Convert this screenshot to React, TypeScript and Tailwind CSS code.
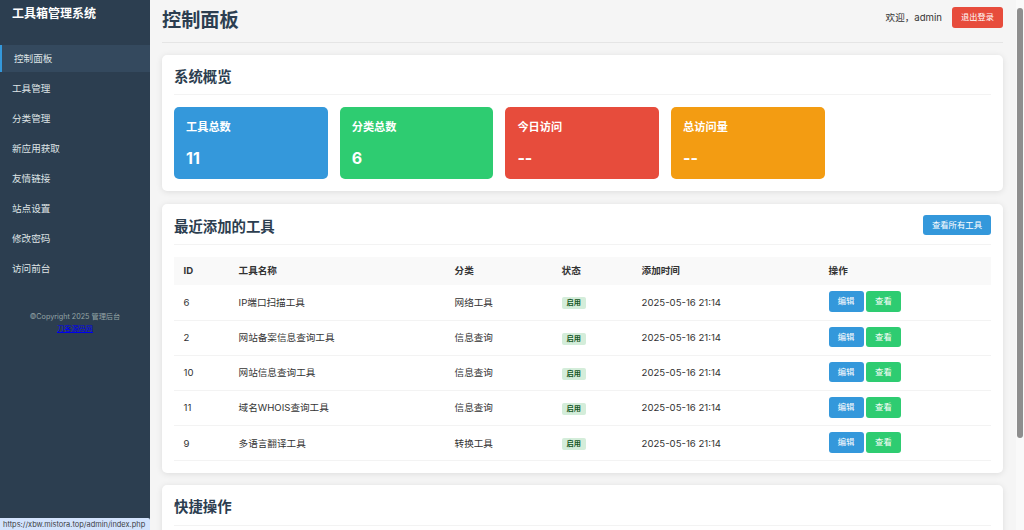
const nav = ["控制面板", "工具管理", "分类管理", "新应用获取", "友情链接", "站点设置", "修改密码", "访问前台"];
const stats = [
  { t: "工具总数", v: "11", c: "bg-[#3498db]" },
  { t: "分类总数", v: "6", c: "bg-[#2ecc71]" },
  { t: "今日访问", v: "--", c: "bg-[#e74c3c]" },
  { t: "总访问量", v: "--", c: "bg-[#f39c12]" },
];
const rows = [
  ["6", "IP端口扫描工具", "网络工具"],
  ["2", "网站备案信息查询工具", "信息查询"],
  ["10", "网站信息查询工具", "信息查询"],
  ["11", "域名WHOIS查询工具", "信息查询"],
  ["9", "多语言翻译工具", "转换工具"],
];

export default function App() {
  return (
    <div className="relative flex h-[530px] w-[1024px] overflow-hidden bg-[#f5f5f5] text-[#333333] font-['Inter','Noto_Sans_CJK_SC',sans-serif]">
      <aside className="w-[150px] shrink-0 bg-[#2c3e50] text-white">
        <div className="h-[45px] pl-3 pt-[5px] text-[12px] leading-[17px] font-bold">工具箱管理系统</div>
        <nav className="flex flex-col">
          {nav.map((n, i) => (
            <div
              key={n}
              className={
                i === 0
                  ? "h-[27px] mb-[3px] pl-3 pt-[1px] flex items-center border-l-[2.5px] border-[#3498db] bg-[#34495e] text-[9.6px] text-[#dfe4e6]"
                  : "h-[27px] mb-[3px] pl-3 pt-[1px] flex items-center text-[9.6px] text-[#dfe4e6]"
              }
            >
              {n}
            </div>
          ))}
        </nav>
        <div className="mt-[26px] text-center text-[7.2px] leading-[11.5px] text-[#95a5a6]">
          <div>©Copyright 2025 管理后台</div>
          <div className="text-[#0000ee] underline">刀客源码网</div>
        </div>
      </aside>

      <main className="flex-1 min-w-0 pl-3 pr-[13px]">
        <header className="h-[43px] mb-3 flex items-center justify-between border-b border-[#e5e5e5]">
          <h1 className="text-[19.2px] leading-[40px] font-bold text-[#2c3e50] -mt-[2px]">控制面板</h1>
          <div className="flex items-center gap-[10px] -mt-[7px]">
            <span className="mt-[1px] text-[9.6px]">欢迎，admin</span>
            <button className="h-[20.4px] w-[51px] rounded-[3px] bg-[#e74c3c] text-[8.2px] text-white">退出登录</button>
          </div>
        </header>

        <section className="mb-[13px] h-[136px] rounded-[5px] bg-white px-3 pt-3 shadow-[0_1px_6px_rgba(0,0,0,0.1)]">
          <h2 className="h-[28px] border-b border-[#f3f3f3] text-[14.4px] leading-[20px] font-bold text-[#2c3e50]">系统概览</h2>
          <div className="mt-3 flex gap-3">
            {stats.map((s) => (
              <div key={s.t} className={`h-[72px] w-[153.7px] rounded-[5px] px-3 pt-[13px] text-white ${s.c}`}>
                <div className="text-[11.2px] leading-[15px] font-bold">{s.t}</div>
                <div className="mt-[11px] text-[16px] leading-[24px] font-bold">{s.v}</div>
              </div>
            ))}
          </div>
        </section>

        <section className="mb-3 h-[269px] rounded-[5px] bg-white px-3 pt-3 shadow-[0_1px_6px_rgba(0,0,0,0.1)]">
          <div className="flex h-[29px] items-start justify-between border-b border-[#f3f3f3]">
            <h2 className="text-[14.4px] leading-[21px] font-bold text-[#2c3e50]">最近添加的工具</h2>
            <button className="h-[20.4px] w-[68px] rounded-[3px] bg-[#3498db] text-[8.4px] text-white -mt-[1px]">查看所有工具</button>
          </div>
          <table className="mt-3 w-[817px] table-fixed text-left text-[9.6px]">
            <colgroup>
              <col className="w-[55px]" />
              <col className="w-[216px]" />
              <col className="w-[107px]" />
              <col className="w-[80px]" />
              <col className="w-[187px]" />
              <col />
            </colgroup>
            <thead>
              <tr className="h-[28px] bg-[#f9f9f9]">
                {["ID", "工具名称", "分类", "状态", "添加时间", "操作"].map((h) => (
                  <th key={h} className="pl-[9.6px] font-bold">{h}</th>
                ))}
              </tr>
            </thead>
            <tbody>
              {rows.map((r) => (
                <tr key={r[0]} className="h-[35.2px] border-b border-[#f3f3f3]">
                  <td className="pl-[9.6px] pt-[1px]">{r[0]}</td>
                  <td className="pl-[9.6px] pt-[1px]">{r[1]}</td>
                  <td className="pl-[9.6px] pt-[1px]">{r[2]}</td>
                  <td className="pl-[9.6px]">
                    <span className="inline-block rounded-[2px] bg-[#d4edda] px-[5px] text-[7.2px] leading-[12px] font-bold text-[#155724]">启用</span>
                  </td>
                  <td className="pl-[9.6px] pt-[1px]">2025-05-16 21:14</td>
                  <td className="pl-[9.6px]">
                    <div className="flex gap-[2.4px] -mt-[1.5px]">
                      <button className="h-[20.5px] w-[35px] rounded-[3px] bg-[#3498db] text-[8.4px] text-white">编辑</button>
                      <button className="h-[20.5px] w-[35px] rounded-[3px] bg-[#2ecc71] text-[8.4px] text-white">查看</button>
                    </div>
                  </td>
                </tr>
              ))}
            </tbody>
          </table>
        </section>

        <section className="h-[200px] rounded-[5px] bg-white px-3 pt-3 shadow-[0_1px_6px_rgba(0,0,0,0.1)]">
          <h2 className="h-[29px] border-b border-[#f3f3f3] text-[14.4px] leading-[20px] font-bold text-[#2c3e50]">快捷操作</h2>
        </section>
      </main>

      <div className="flex w-[8px] shrink-0 flex-col items-center bg-[#f9f9f9]">
        <div className="h-[8px] w-full" />
        <div className="h-[430px] w-[6px] rounded-[3px] bg-[#8e8e8e]" />
      </div>

      <div className="absolute bottom-0 left-0 h-[12px] w-[150px] rounded-tr-[2px] bg-[#d3e3fd] pl-[3px] text-[7.45px] leading-[13px] whitespace-nowrap text-[#3c4043]">
        https://xbw.mistora.top/admin/index.php
      </div>
    </div>
  );
}
